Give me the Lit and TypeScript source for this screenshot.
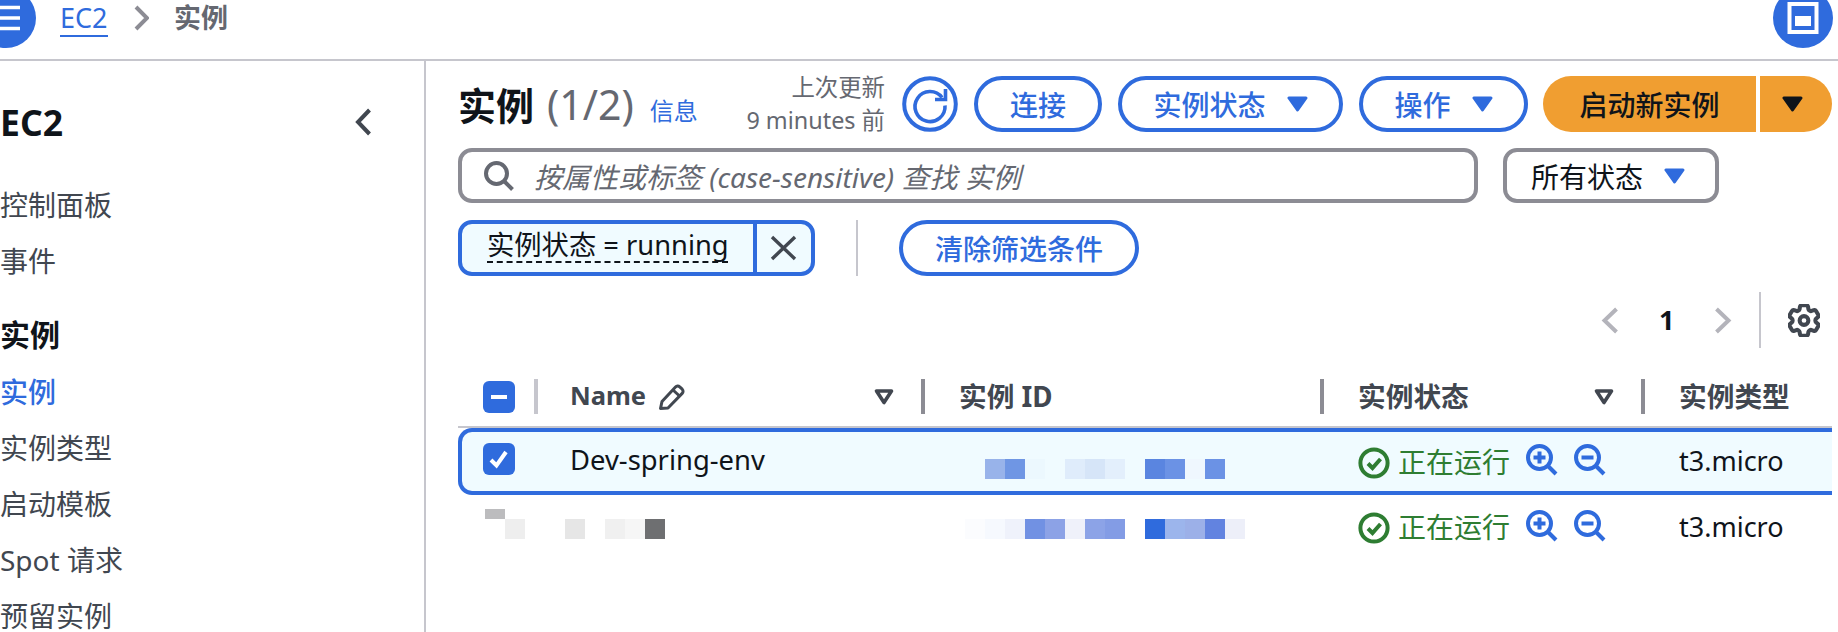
import { LitElement, html, css, svg } from "lit";
import { customElement } from "lit/decorators.js";

const caret = (c: string) => html`<svg class="caret" viewBox="0 0 21 16"><path d="M2 2h17l-8.5 12z" fill="${c}" stroke="${c}" stroke-width="3" stroke-linejoin="round"/></svg>`;
const filt = html`<svg class="filt" viewBox="0 0 20 16"><path d="M2.5 2h15L10 13.5z" fill="none" stroke="#414750" stroke-width="3.6" stroke-linejoin="round"/></svg>`;
const good = html`<svg class="good" viewBox="0 0 32 32"><circle cx="16" cy="16" r="13.6" fill="none" stroke="#2e7d32" stroke-width="4"/><path d="M10 16.5l4.5 4.5 8-9" fill="none" stroke="#2e7d32" stroke-width="4"/></svg>`;
const zoomIcon = (plus: boolean) => html`<svg class="zm" viewBox="0 0 32 32"><circle cx="13.5" cy="13.5" r="11.5" fill="none" stroke="#2f6bdd" stroke-width="4"/><path d="M22 22l8 8" stroke="#2f6bdd" stroke-width="4" fill="none"/>${plus ? svg`<path d="M13.5 7.5v12M7.5 13.5h12" stroke="#2f6bdd" stroke-width="4" fill="none"/>` : svg`<path d="M7.5 13.5h12" stroke="#2f6bdd" stroke-width="4" fill="none"/>`}</svg>`;
const T = "transparent";
const id1 = ["#98b3ea", "#6f96e4", "#ecf8fe", T, "#dfecfb", "#d6e5f8", "#e3effc", T, "#5a85e0", "#6b92e5", "#eff7fe", "#6b92e5"];
const id2 = ["#fbfcfe", "#f6f9fe", "#eff2fb", "#7191e3", "#8ca2e6", "#eff1fa", "#8ca3e7", "#839ce5", T, "#2f6bdd", "#9cb5ec", "#9cb0e8", "#6283e0", "#edeff9"];
const name2 = [T, "#eeeeee", T, T, "#e6e6e6", T, "#f0f0f0", "#f6f6f6", "#6e6f71"];
const cells = (list: string[]) => list.map((c) => html`<i style="background:${c}"></i>`);
const statusCell = html`<div class="status">${good}<span class="run">正在运行</span><span class="zooms">${zoomIcon(true)}${zoomIcon(false)}</span></div>`;

@customElement("app-root")
export class AppRoot extends LitElement {
  static styles = css`
    :host { display: block; width: 1838px; height: 632px; overflow: hidden; background: #fff; color: #0f141a;
      font-family: "Noto Sans", "Noto Sans CJK SC", sans-serif; font-size: 28px; }
    * { box-sizing: border-box; }
    svg { display: block; flex: none; }
    .top { height: 61px; border-bottom: 2px solid #c6c6cd; display: flex; overflow: hidden; padding-right: 5px; }
    .circle { width: 60px; height: 60px; margin-top: -12px; border-radius: 50%; background: #2f6bdd; flex: none; }
    .circle.menu { margin-left: -24px; }
    .circle.side { margin-left: auto; }
    .crumbs { display: flex; align-items: flex-start; margin-left: 24px; line-height: 36px; font-size: 27px; }
    .crumbs a { color: #2f6bdd; height: 37px; border-bottom: 2px solid #2f6bdd; width: 48px; white-space: nowrap; }
    .crumbs svg { margin: 5px 25px 0 26px; }
    .crumbs b { color: #656871; font-weight: 700; font-size: 27px; }
    .body { display: flex; height: 571px; }
    .nav { width: 426px; flex: none; border-right: 2px solid #c6c6cd; padding: 32px 0 0 0; color: #414750; overflow: hidden; }
    .navhead { display: flex; justify-content: space-between; align-items: center; height: 58px; padding-right: 52px; margin-bottom: 26px; color: #0f141a; font-size: 35.5px; font-weight: 700; }
    .navitem { height: 56px; padding: 14px 0; line-height: 28px; font-size: 28px; white-space: nowrap; }
    .navgroup { height: 56px; line-height: 56px; margin: 18px 0 1px; font-size: 30px; font-weight: 700; color: #0f141a; }
    .navitem.on { color: #2f6bdd; font-weight: 500; }
    .main { flex: 1; min-width: 0; padding: 15px 6px 0 32px; }
    .row1 { display: flex; align-items: center; height: 56px; }
    h1 { margin: 0; font-size: 38px; line-height: 56px; font-weight: 700; white-space: nowrap; }
    h1 span { color: #656871; font-weight: 400; margin-left: 13px; font-size: 41px; }
    .info { color: #2f6bdd; font-size: 24px; margin-left: 16px; padding-top: 10px; }
    .updated { margin-left: auto; margin-right: 17px; text-align: right; color: #656871; font-size: 23.4px; line-height: 33px; white-space: nowrap; }
    .refresh { width: 56px; height: 56px; margin-right: 16px; }
    .btn { height: 56px; border: 4px solid #2f6bdd; border-radius: 28px; background: #fff; color: #2f6bdd; display: flex; align-items: center; justify-content: center; font-size: 28px; font-weight: 500; white-space: nowrap; flex: none; }
    .b-connect { width: 128px; margin-right: 16px; }
    .b-state { width: 225px; margin-right: 16px; gap: 21px; }
    .b-ops { width: 169px; margin-right: 15px; gap: 21px; }
    .b-launch { width: 213px; height: 56px; background: #f09e31; border-radius: 28px 0 0 28px; display: flex; align-items: center; justify-content: center; font-size: 28px; font-weight: 500; white-space: nowrap; margin-right: 4px; }
    .b-drop { width: 72px; height: 56px; background: #f09e31; border-radius: 0 28px 28px 0; display: flex; align-items: center; padding-left: 22px; }
    .caret { width: 21px; height: 16px; }
    .row2 { display: flex; height: 55px; margin-top: 16px; padding-right: 113px; gap: 25px; }
    .search { flex: 1; border: 4px solid #8c8c94; border-radius: 14px; display: flex; align-items: center; padding-left: 22px; gap: 20px; color: #656871; font-style: italic; font-size: 28px; white-space: nowrap; }
    .select { width: 216px; border: 4px solid #8c8c94; border-radius: 14px; display: flex; align-items: center; padding-left: 24px; gap: 21px; white-space: nowrap; }
    .row3 { display: flex; align-items: center; height: 56px; margin-top: 17px; }
    .token { width: 357px; height: 56px; border: 4px solid #2f6bdd; border-radius: 14px; background: #f0fbff; display: flex; }
    .token span { width: 295px; flex: none; border-right: 4px solid #2f6bdd; padding-left: 25px; line-height: 1; }
    .token u { display: block; width: 241px; height: 37px; margin-top: 2px; line-height: 37px; text-decoration: none; border-bottom: 2px dashed #0f141a; white-space: nowrap; font-size: 27.3px; }
    .token svg { margin: 11px 0 0 13px; }
    .sep { width: 2px; height: 56px; background: #c6c6cd; margin: 0 41px 0 41px; }
    .b-clear { width: 240px; }
    .pager { display: flex; align-items: center; justify-content: flex-end; height: 56px; margin-top: 16px; padding-right: 12px; }
    .pager b { width: 14px; font-size: 27px; margin: 0 41px 0 40px; line-height: 56px; }
    .pager .line { width: 2px; height: 56px; background: #c6c6cd; margin: 0 27px 0 27px; }
    .grid { display: grid; grid-template-columns: 87px 389px 399px 321px 1fr; align-items: center; }
    .head { height: 50px; margin-top: 30px; padding: 0 0 13px 25px; border-bottom: 2px solid #c6c6cd; align-items: stretch; color: #414750; font-weight: 700; font-size: 27.7px; }
    .hc { display: flex; align-items: center; padding-right: 34px; white-space: nowrap; }
    .hc > span { margin-top: -3px; }
    .hc .latin { font-size: 25.5px; }
    .hc.first { padding: 0; gap: 19px; }
    .hc .bar { width: 4px; height: 35px; background: #8c8c94; margin-left: auto; }
    .hc .bar.tight { margin-left: 0; }
    .hc.first .bar { background: #c6c6cd; margin-left: 0; }
    .hc .filt { margin-left: auto; margin-right: 27px; }
    .hc .pen { margin-left: 12px; }
    .filt { width: 20px; height: 16px; }
    .check { width: 32px; height: 32px; }
    .r { height: 67px; border: 4px solid #2f6bdd; border-width: 4px 0 4px 4px; background: #f0fbff; border-radius: 14px 0 0 14px; padding-left: 21px; }
    .r2 { height: 65px; padding-left: 25px; }
    .name { font-size: 27.4px; white-space: nowrap; margin-bottom: 4px; }
    .r .check { margin-top: -5px; }
    .status { display: flex; align-items: center; white-space: nowrap; }
    .good { width: 32px; height: 32px; margin-top: 3px; }
    .run { color: #2e7d32; margin-left: 8px; font-size: 28px; margin-top: -1px; }
    .r2 .good { margin-top: 1px; }
    .r2 .run { margin-top: -3px; }
    .zooms { display: flex; gap: 16px; margin: -3px 0 0 16px; }
    .zm { width: 32px; height: 32px; }
    .type { font-size: 27px; white-space: nowrap; margin-bottom: 2px; }
    .mos { display: grid; grid-auto-columns: 20px; grid-auto-flow: column; grid-auto-rows: 20px; }
    .mos i { display: block; height: 20px; }
    .m1 { margin: 15px 0 0 26px; }
    .m2 { margin: 3px 0 0 6px; }
    .mn { grid-column: 1 / 3; margin: 0 0 7px 2px; }
    .mn .t { width: 20px; height: 10px; background: #bcbcbe; }
  `;

  render() {
    return html`
      <div class="top">
        <div class="circle menu"><svg width="60" height="60" viewBox="0 0 60 60"><path d="M15 19.5h29M15 30h29M15 40.5h29" stroke="#fff" stroke-width="3.6"/></svg></div>
        <div class="crumbs">
          <a>EC2</a>
          <svg width="15" height="26" viewBox="0 0 15 26"><path d="M2 2l11 11L2 24" fill="none" stroke="#8c8c94" stroke-width="4"/></svg>
          <b>实例</b>
        </div>
        <div class="circle side"><svg width="60" height="60" viewBox="0 0 60 60"><rect x="16.5" y="16" width="27" height="28" fill="none" stroke="#fff" stroke-width="4"/><rect x="22" y="28" width="16" height="10" fill="#fff"/></svg></div>
      </div>
      <div class="body">
        <aside class="nav">
          <div class="navhead"><span>EC2</span><svg width="17" height="28" viewBox="0 0 17 28"><path d="M14.5 2L3 14l11.5 12" fill="none" stroke="#414750" stroke-width="4"/></svg></div>
          <div class="navitem">控制面板</div>
          <div class="navitem">事件</div>
          <div class="navgroup">实例</div>
          <div class="navitem on">实例</div>
          <div class="navitem">实例类型</div>
          <div class="navitem">启动模板</div>
          <div class="navitem">Spot 请求</div>
          <div class="navitem">预留实例</div>
        </aside>
        <main class="main">
          <div class="row1">
            <h1>实例<span>(1/2)</span></h1>
            <span class="info">信息</span>
            <div class="updated">上次更新<br />9 minutes 前</div>
            <svg class="refresh" viewBox="0 0 56 56"><circle cx="28" cy="28" r="25.8" fill="none" stroke="#2f6bdd" stroke-width="4"/><path d="M40 21.5A15 15 0 1 0 43 29.5" fill="none" stroke="#2f6bdd" stroke-width="3.6"/><path d="M33 23.5h10.5V13" fill="none" stroke="#2f6bdd" stroke-width="3.6"/></svg>
            <div class="btn b-connect">连接</div>
            <div class="btn b-state"><span>实例状态</span>${caret("#2f6bdd")}</div>
            <div class="btn b-ops"><span>操作</span>${caret("#2f6bdd")}</div>
            <div class="b-launch">启动新实例</div>
            <div class="b-drop">${caret("#0f141a")}</div>
          </div>
          <div class="row2">
            <div class="search">
              <svg width="30" height="30" viewBox="0 0 30 30"><circle cx="12.5" cy="12.5" r="10.5" fill="none" stroke="#656871" stroke-width="4"/><path d="M20 20l8.5 8.5" stroke="#656871" stroke-width="4"/></svg>
              <span>按属性或标签 (case-sensitive) 查找 实例</span>
            </div>
            <div class="select"><span>所有状态</span>${caret("#2f6bdd")}</div>
          </div>
          <div class="row3">
            <div class="token">
              <span><u>实例状态 = running</u></span>
              <svg width="27" height="26" viewBox="0 0 27 26"><path d="M2 2l23 22M25 2L2 24" stroke="#414750" stroke-width="3.4"/></svg>
            </div>
            <div class="sep"></div>
            <div class="btn b-clear">清除筛选条件</div>
          </div>
          <div class="pager">
            <svg width="18" height="27" viewBox="0 0 18 27"><path d="M15.5 2L3.5 13.5 15.5 25" fill="none" stroke="#b4b4bb" stroke-width="4"/></svg>
            <b>1</b>
            <svg width="18" height="27" viewBox="0 0 18 27"><path d="M2.5 2l12 11.5L2.5 25" fill="none" stroke="#b4b4bb" stroke-width="4"/></svg>
            <div class="line"></div>
            <svg width="32" height="33" viewBox="2.5 2.25 19 19.5"><path d="M9.594 3.94c.09-.542.56-.94 1.11-.94h2.593c.55 0 1.02.398 1.11.94l.213 1.281c.063.374.313.686.645.87.074.04.147.083.22.127.325.196.72.257 1.075.124l1.217-.456a1.125 1.125 0 0 1 1.37.49l1.296 2.247a1.125 1.125 0 0 1-.26 1.431l-1.003.827c-.293.241-.438.613-.43.992a7.723 7.723 0 0 1 0 .255c-.008.378.137.75.43.991l1.004.827c.424.35.534.955.26 1.43l-1.298 2.247a1.125 1.125 0 0 1-1.369.491l-1.217-.456c-.355-.133-.75-.072-1.076.124a6.47 6.47 0 0 1-.22.128c-.331.183-.581.495-.644.869l-.213 1.281c-.09.543-.56.94-1.11.94h-2.594c-.55 0-1.019-.398-1.11-.94l-.213-1.281c-.062-.374-.312-.686-.644-.87a6.52 6.52 0 0 1-.22-.127c-.325-.196-.72-.257-1.076-.124l-1.217.456a1.125 1.125 0 0 1-1.369-.49l-1.297-2.247a1.125 1.125 0 0 1 .26-1.431l1.004-.827c.292-.24.437-.613.43-.991a6.932 6.932 0 0 1 0-.255c.007-.38-.138-.751-.43-.992l-1.004-.827a1.125 1.125 0 0 1-.26-1.43l1.297-2.247a1.125 1.125 0 0 1 1.37-.491l1.216.456c.356.133.751.072 1.076-.124.072-.044.146-.086.22-.128.332-.183.582-.495.644-.869l.214-1.28Z" fill="none" stroke="#414750" stroke-width="2.4"/><circle cx="12" cy="12" r="2.6" fill="none" stroke="#414750" stroke-width="2.4"/></svg>
          </div>
          <div class="grid head">
            <div class="hc first">
              <svg class="check" viewBox="0 0 32 32"><rect width="32" height="32" rx="6" fill="#2f6bdd"/><path d="M8 16h16" stroke="#fff" stroke-width="4"/></svg>
              <div class="bar"></div>
            </div>
            <div class="hc"><span class="latin">Name</span>
              <svg class="pen" width="28" height="28" viewBox="0 0 28 28"><path d="M2.5 25.5l1.5-7L17.5 4a3 3 0 0 1 4.2-.2l2.5 2.4a3 3 0 0 1 0 4.2L10 25z" fill="none" stroke="#414750" stroke-width="3" stroke-linejoin="round"/><path d="M15 7l6.5 6" stroke="#414750" stroke-width="3"/></svg>
              ${filt}<div class="bar tight"></div></div>
            <div class="hc"><span>实例 ID</span><div class="bar"></div></div>
            <div class="hc"><span>实例状态</span>${filt}<div class="bar tight"></div></div>
            <div class="hc"><span>实例类型</span></div>
          </div>
          <div class="grid r">
            <svg class="check" viewBox="0 0 32 32"><rect width="32" height="32" rx="6" fill="#2f6bdd"/><path d="M8 17l5.5 5.5L23 9" fill="none" stroke="#fff" stroke-width="4"/></svg>
            <div class="name">Dev-spring-env</div>
            <div class="mos m1">${cells(id1)}</div>
            ${statusCell}
            <div class="type">t3.micro</div>
          </div>
          <div class="grid r2">
            <div class="mn"><div class="t"></div><div class="mos">${cells(name2)}</div></div>
            <div class="mos m2">${cells(id2)}</div>
            ${statusCell}
            <div class="type">t3.micro</div>
          </div>
        </main>
      </div>
    `;
  }
}
